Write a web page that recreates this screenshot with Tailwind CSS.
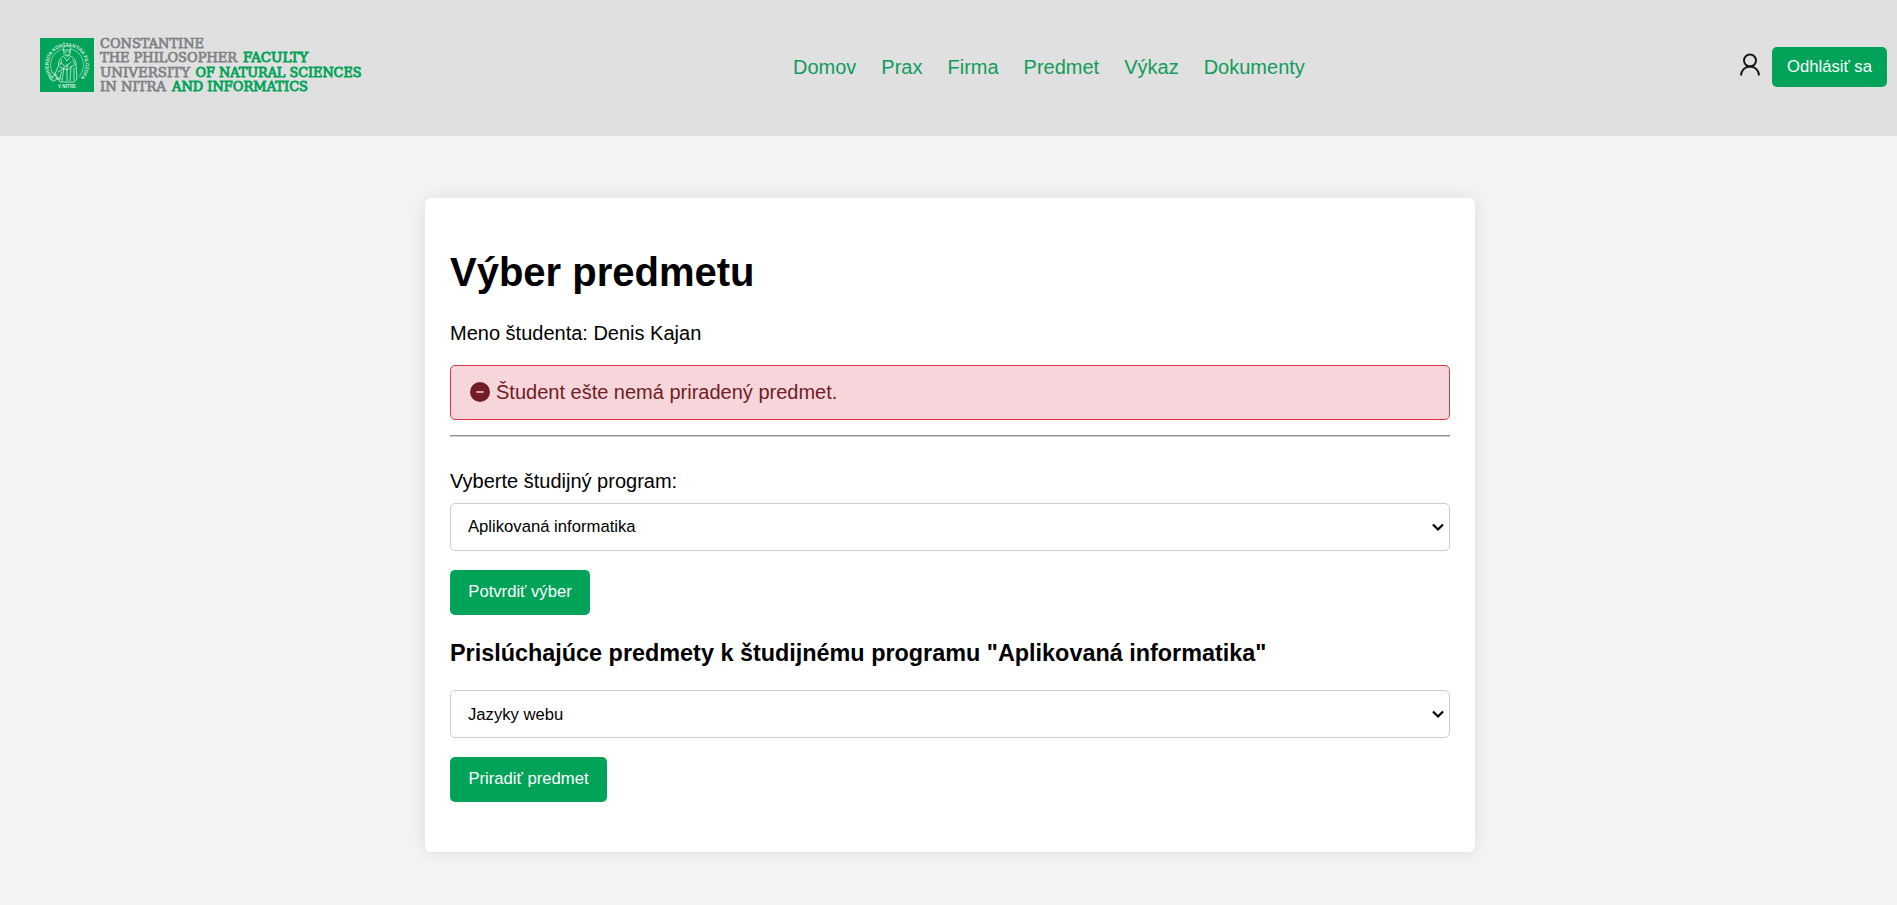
<!DOCTYPE html>
<html lang="sk">
<head>
<meta charset="utf-8">
<title>Výber predmetu</title>
<script src="https://cdn.jsdelivr.net/npm/@tailwindcss/browser@4"></script>
</head>
<body class="min-h-screen bg-[#f4f4f4] text-xl leading-[23px] text-black font-['Liberation_Sans',sans-serif]">
<header class="flex h-[136px] items-center bg-[#e0e0e0] pr-[10px] pl-10">
  <svg class="mb-[6px] h-[56px] w-[326px] shrink-0 overflow-visible" viewBox="0 0 326 56" role="img">
    <rect x="0" y="1" width="54" height="54" fill="#00a357"/>
    <g fill="none" stroke="#d5f0e1" stroke-width=".8" stroke-linecap="round" stroke-linejoin="round">
      <path d="M12.500 36a16.500 16.500 0 0 1 10-24M31.500 12a16.500 16.500 0 0 1 8 27" stroke-opacity=".75"/>
      <path d="M23.500 11c0-3 7-3 7 0l-.6 6c-.8 3-5 3-5.800 0zM23.500 13h7M25 15h1.500M28.500 15h1.500M26 18h3"/>
      <path d="M23.500 19c-4 2-5 5-5 10l-4 9 5 4 2-7M30.500 19c4 2 5.500 5 5.500 9l1 14-3 3H20l-2-3M24 20l3 4 3-4M21 26l5 4 5-5M20 30l7 3 7-5M18 35l5-3M24 30l-2 14M27 27v17M31 29l-1 15M34 31v12M22 23l-2 5M33 23l2 5"/>
      <path d="M10 41l5-3 3 4-5 2zM13 36l4 2M16 41l5 1"/>
    </g>
    <path id="ring" d="M13.900 41.100A18.500 18.500 0 1 1 40.100 41.100" fill="none"/>
    <g fill="#d5f0e1" font-family="Liberation Sans" font-weight="700" font-size="5">
      <text textLength="86" lengthAdjust="spacingAndGlyphs"><textPath href="#ring">UNIVERSITA KONŠTANTÍNA FILOZOFA</textPath></text>
      <text x="18" y="50.500" textLength="18" lengthAdjust="spacingAndGlyphs">V NITRE</text>
    </g>
    <g font-family="DejaVu Serif" font-size="13.500" fill="#808285" stroke="#808285" stroke-width=".75">
      <text x="60" y="10.500" textLength="104" lengthAdjust="spacingAndGlyphs">CONSTANTINE</text>
      <text x="60" y="25" textLength="137" lengthAdjust="spacingAndGlyphs">THE PHILOSOPHER</text>
      <text x="60" y="39.700" textLength="90" lengthAdjust="spacingAndGlyphs">UNIVERSITY</text>
      <text x="60" y="54.300" textLength="66" lengthAdjust="spacingAndGlyphs">IN NITRA</text>
      <g fill="#00a357" stroke="#00a357" stroke-width=".9">
        <text x="203" y="25" textLength="65" lengthAdjust="spacingAndGlyphs">FACULTY</text>
        <text x="155.500" y="39.700" textLength="166" lengthAdjust="spacingAndGlyphs">OF NATURAL SCIENCES</text>
        <text x="132" y="54.300" textLength="136" lengthAdjust="spacingAndGlyphs">AND INFORMATICS</text>
      </g>
    </g>
  </svg>
  <nav class="mb-[2px] ml-[427px] flex gap-[25px] text-[#109c5b]">
    <a>Domov</a><a>Prax</a><a>Firma</a><a>Predmet</a><a>Výkaz</a><a>Dokumenty</a>
  </nav>
  <div class="ml-auto flex items-center gap-[10px]">
    <svg class="mb-[6px] h-6 w-6" viewBox="0 0 24 24" fill="none" stroke="#111" stroke-width="1.900"><circle cx="12" cy="7.500" r="6"/><path d="M3 22.500a9 9 0 0 1 18 0"/></svg>
    <button class="mb-[2px] h-10 w-[115px] rounded-[5px] bg-[#00a357] pb-[2px] text-[16.67px] text-white">Odhlásiť sa</button>
  </div>
</header>
<main class="mt-[62px] ml-[425px] h-[654px] w-[1050px] rounded-[6px] bg-white px-[25px] pt-[51px] shadow-[0_0_20px_rgba(0,0,0,0.1)]">
  <h1 class="text-[40px] leading-[46px] font-bold">Výber predmetu</h1>
  <p class="mt-[27px]">Meno študenta: Denis Kajan</p>
  <div class="mt-[20px] flex h-[55px] items-center gap-[6px] rounded-[5px] border border-[#dc3545] bg-[#f6d6da] pl-[19px] text-[#721c24]">
    <svg class="mb-[2px] h-5 w-5" viewBox="0 0 16 16"><circle cx="8" cy="8" r="8" fill="currentColor"/><path d="M5.500 8h5" stroke="#f6d6da" stroke-width="1.300" stroke-linecap="round"/></svg>
    <span class="mb-px">Študent ešte nemá priradený predmet.</span>
  </div>
  <hr class="mt-[15px] h-[2px] border-0 border-t border-b border-t-[#909090] border-b-[#d2d2d2]">
  <label class="mt-[33px] block">Vyberte študijný program:</label>
  <div class="mt-[10px] flex h-12 items-center justify-between rounded-[5px] border border-[#ccc] pr-[5px] pl-[17px] text-[16.67px]">
    <span class="mb-px">Aplikovaná informatika</span>
    <svg class="h-3 w-3" viewBox="0 0 12 12" fill="none" stroke="#000" stroke-width="2.200"><path d="M1 3.500l5 5 5-5"/></svg>
  </div>
  <button class="mt-[19px] block h-[45px] w-[140px] rounded-[5px] bg-[#00a357] pb-[2px] text-[16.67px] text-white">Potvrdiť výber</button>
  <h3 class="mt-[24px] text-[23.4px] leading-[28px] font-bold">Prislúchajúce predmety k študijnému programu "Aplikovaná informatika"</h3>
  <div class="mt-[23px] flex h-12 items-center justify-between rounded-[5px] border border-[#ccc] pr-[5px] pl-[17px] text-[16.67px]">
    <span>Jazyky webu</span>
    <svg class="h-3 w-3" viewBox="0 0 12 12" fill="none" stroke="#000" stroke-width="2.200"><path d="M1 3.500l5 5 5-5"/></svg>
  </div>
  <button class="mt-[19px] block h-[45px] w-[157px] rounded-[5px] bg-[#00a357] pb-[2px] text-[16.67px] text-white">Priradiť predmet</button>
</main>
</body>
</html>
